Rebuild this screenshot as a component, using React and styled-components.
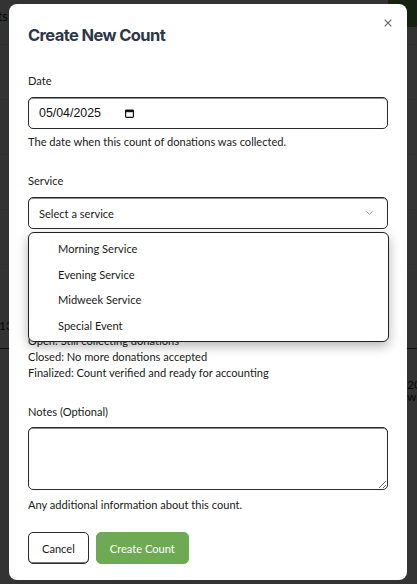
import React from "react";
import styled, { createGlobalStyle } from "styled-components";

const GlobalStyle = createGlobalStyle`
  html, body { margin: 0; padding: 0; }
  body {
    font-family: Lato, "Noto Sans", sans-serif;
    color: #1a1a1a;
    background: #fff;
  }
  *, *::before, *::after { box-sizing: border-box; }
`;

const FS = "11.1px";

const Screen = styled.div`
  position: relative;
  width: 417px;
  height: 584px;
  overflow: hidden;
  background: #fff;
`;

/* ---------- page behind the dialog ---------- */
const BackPage = styled.div`
  display: flex;
  flex-direction: column;
  height: 100%;
  font-size: 13px;
  color: #222;
`;

const BackHeader = styled.header`
  display: flex;
  justify-content: space-between;
  align-items: flex-start;
  height: 45px;
  border-bottom: 1px solid #e6e6e6;
`;

const BackTitle = styled.span`
  width: 60px;
  margin: 8px 0 0 -52px;
  text-align: right;
  white-space: nowrap;
`;

const BackAction = styled.span`
  display: flex;
  align-items: center;
  width: 100px;
  height: 27px;
  margin-right: -71px;
  padding-left: 32px;
  background: #6aa84f;
  color: #fff;
  border-radius: 0 0 0 6px;
  font-size: 13px;
`;

const BackRow = styled.div`
  display: flex;
  justify-content: space-between;
  align-items: ${(p) => (p.$bottom ? "flex-end" : "center")};
  height: ${(p) => p.$h}px;
  padding: 0 0 ${(p) => (p.$bottom ? 16 : 0)}px;
  border-bottom: 1px solid ${(p) => p.$line || "#ececec"};
`;

const BackCell = styled.span`
  white-space: nowrap;
  margin: ${(p) => p.$m || "0"};
  line-height: 12px;
  font-size: 12px;
`;

const BackFooter = styled.div`
  display: flex;
  justify-content: flex-end;
  padding-top: 30px;
`;

const BackNote = styled.div`
  margin-right: -40px;
  width: 50px;
  font-size: 12px;
  line-height: 12px;
`;

/* ---------- dialog ---------- */
const Overlay = styled.div`
  position: absolute;
  inset: 0;
  background: rgba(0, 0, 0, 0.8);
  display: flex;
  align-items: center;
  justify-content: flex-start;
  padding-left: 9px;
`;

const Modal = styled.div`
  position: relative;
  width: 398px;
  background: #fff;
  border-radius: 8px;
  padding: 21px 19px 16px;
`;

const CloseButton = styled.button`
  position: absolute;
  top: 12px;
  right: 12px;
  width: 14px;
  height: 14px;
  padding: 0;
  border: none;
  background: transparent;
  display: flex;
  align-items: center;
  justify-content: center;
  color: #666;
  cursor: pointer;
`;

const Title = styled.h2`
  margin: 0 0 28px;
  font-family: Inter, "Liberation Sans", sans-serif;
  font-weight: 700;
  font-size: 16.5px;
  line-height: 20px;
  letter-spacing: -0.6px;
  color: #2d3748;
`;

const Form = styled.form`
  display: flex;
  flex-direction: column;
`;

const Field = styled.div`
  display: flex;
  flex-direction: column;
  margin-top: ${(p) => p.$mt || 0}px;
`;

const Label = styled.label`
  font-size: ${FS};
  line-height: 16px;
  margin-bottom: ${(p) => p.$mb || 8}px;
  color: #1a1a1a;
`;

const Helper = styled.div`
  font-size: ${FS};
  line-height: 16px;
  margin-top: ${(p) => p.$mt || 5}px;
  color: #1a1a1a;
`;

const boxBorder = `
  border: 1px solid #2b2b2b;
  border-radius: 5px;
  box-shadow: inset 0 1px 0 #8a8a8a;
  background: #fff;
`;

const DateBox = styled.div`
  ${boxBorder}
  display: flex;
  align-items: center;
  gap: 24px;
  height: 32px;
  padding: 0 10px;
`;

const DateText = styled.span`
  font-family: "Liberation Sans", Arial, sans-serif;
  font-size: 12.4px;
  color: #111;
`;

const SelectWrap = styled.div`
  position: relative;
`;

const SelectBox = styled.div`
  ${boxBorder}
  display: flex;
  align-items: center;
  justify-content: space-between;
  height: 32px;
  padding: 0 14px 0 10px;
  font-size: ${FS};
  color: #1a1a1a;
`;

const Dropdown = styled.ul`
  position: absolute;
  top: calc(100% + 3px);
  left: 0;
  right: -1px;
  margin: 0;
  padding: 3px 0 3px;
  list-style: none;
  background: #fff;
  border: 1px solid #222;
  border-radius: 6px;
  box-shadow: 0 4px 12px rgba(0, 0, 0, 0.3);
  z-index: 2;
`;

const Option = styled.li`
  height: 25.5px;
  display: flex;
  align-items: center;
  padding-left: 29px;
  font-size: ${FS};
  color: #1a1a1a;
`;

const TextArea = styled.textarea`
  ${boxBorder}
  display: block;
  width: 100%;
  height: 63px;
  padding: 6px 10px;
  font-family: inherit;
  font-size: ${FS};
  resize: vertical;
`;

const Actions = styled.div`
  display: flex;
  gap: 7px;
  margin-top: 19px;
`;

const Button = styled.button`
  height: 32px;
  padding: 0 13px;
  border-radius: 5px;
  font-family: Lato, sans-serif;
  font-size: ${FS};
  cursor: pointer;
  border: ${(p) => (p.$primary ? "1px solid #6daa53" : "1px solid #2b2b2b")};
  background: ${(p) => (p.$primary ? "#6daa53" : "#fff")};
  color: ${(p) => (p.$primary ? "#fff" : "#1a1a1a")};
  box-shadow: ${(p) => (p.$primary ? "none" : "inset 0 -1px 0 #777")};
`;

const CalendarIcon = () => (
  <svg width="9" height="9" viewBox="0 0 9 9" aria-hidden="true">
    <rect x="0.6" y="1" width="7.8" height="7.4" rx="0.8" fill="none" stroke="#111" strokeWidth="1.2" />
    <rect x="0.6" y="1" width="7.8" height="2.2" fill="#111" />
  </svg>
);

const Chevron = () => (
  <svg width="7" height="4" viewBox="0 0 7 4" aria-hidden="true">
    <path d="M0.5 0.5 L3.5 3.3 L6.5 0.5" fill="none" stroke="#8a8a8a" strokeWidth="0.9" />
  </svg>
);

const CloseIcon = () => (
  <svg width="8" height="8" viewBox="0 0 8 8" aria-hidden="true">
    <path d="M0.7 0.7 L7.3 7.3 M7.3 0.7 L0.7 7.3" stroke="#666" strokeWidth="1.2" fill="none" />
  </svg>
);

const services = ["Morning Service", "Evening Service", "Midweek Service", "Special Event"];

export default function App() {
  return (
    <Screen>
      <GlobalStyle />
      <BackPage>
        <BackHeader>
          <BackTitle>Counts</BackTitle>
          <BackAction>View</BackAction>
        </BackHeader>
        <BackRow $h={55} />
        <BackRow $h={55} />
        <BackRow $h={55} />
        <BackRow $h={55} />
        <BackRow $h={84} $line="#3a3a3a" $bottom>
          <BackCell $m="0 0 0 -8px">113</BackCell>
        </BackRow>
        <BackFooter>
          <BackNote>2025 with</BackNote>
        </BackFooter>
      </BackPage>

      <Overlay>
        <Modal role="dialog" aria-modal="true">
          <CloseButton aria-label="Close">
            <CloseIcon />
          </CloseButton>
          <Title>Create New Count</Title>
          <Form>
            <Field>
              <Label>Date</Label>
              <DateBox>
                <DateText>05/04/2025</DateText>
                <CalendarIcon />
              </DateBox>
              <Helper>The date when this count of donations was collected.</Helper>
            </Field>

            <Field $mt={23}>
              <Label>Service</Label>
              <SelectWrap>
                <SelectBox>
                  <span>Select a service</span>
                  <Chevron />
                </SelectBox>
                <Dropdown role="listbox">
                  {services.map((s) => (
                    <Option key={s} role="option">{s}</Option>
                  ))}
                </Dropdown>
              </SelectWrap>
            </Field>

            <Field $mt={23}>
              <Label>Status</Label>
              <SelectBox>
                <span>Open</span>
                <Chevron />
              </SelectBox>
              <Helper $mt={9}>
                The current status of this count.
                <br />
                Open: Still collecting donations
                <br />
                Closed: No more donations accepted
                <br />
                Finalized: Count verified and ready for accounting
              </Helper>
            </Field>

            <Field $mt={23}>
              <Label $mb={7}>Notes (Optional)</Label>
              <TextArea />
              <Helper $mt={7}>Any additional information about this count.</Helper>
            </Field>

            <Actions>
              <Button type="button">Cancel</Button>
              <Button type="button" $primary>Create Count</Button>
            </Actions>
          </Form>
        </Modal>
      </Overlay>
    </Screen>
  );
}
